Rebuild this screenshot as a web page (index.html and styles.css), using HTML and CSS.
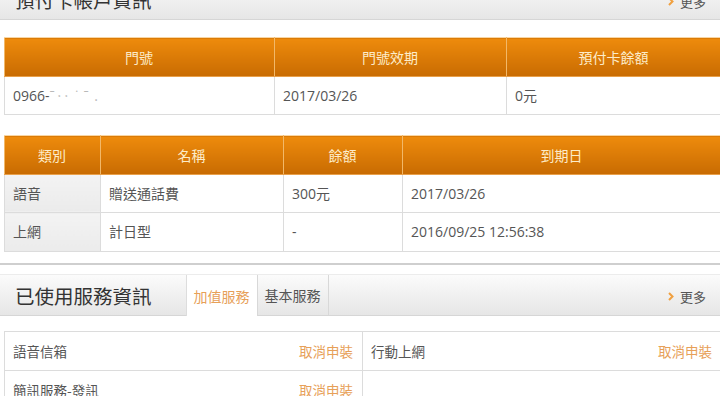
FILE: index.html
```html
<!DOCTYPE html>
<html lang="zh-Hant">
<head>
<meta charset="utf-8">
<title>帳戶資訊</title>
<link rel="stylesheet" href="styles.css">
</head>
<body>
<div class="page">
  <section class="panel panel-first">
    <div class="panel-head">
      <h2 class="panel-title">預付卡帳戶資訊</h2>
      <a class="more" href="#"><svg class="chev" width="6" height="9" viewBox="0 0 6 9"><path d="M1 1l3.5 3.5L1 8" fill="none" stroke="#f0a040" stroke-width="2"/></svg>更多</a>
    </div>
    <div class="panel-body">
      <table class="grid grid-acct">
        <thead>
          <tr><th class="c-num">門號</th><th class="c-exp">門號效期</th><th>預付卡餘額</th></tr>
        </thead>
        <tbody>
          <tr><td>0966-<span class="masked">ˉ‥ ˙ ˉ  .</span></td><td>2017/03/26</td><td>0元</td></tr>
        </tbody>
      </table>
      <table class="grid grid-bal">
        <thead>
          <tr><th class="c-type">類別</th><th class="c-name">名稱</th><th class="c-amt">餘額</th><th>到期日</th></tr>
        </thead>
        <tbody>
          <tr><td class="cat">語音</td><td>贈送通話費</td><td>300元</td><td>2017/03/26</td></tr>
          <tr><td class="cat">上網</td><td>計日型</td><td>-</td><td>2016/09/25 12:56:38</td></tr>
        </tbody>
      </table>
    </div>
  </section>
  <section class="panel">
    <div class="panel-head">
      <h2 class="panel-title">已使用服務資訊</h2>
      <nav class="tabs">
        <span class="tab tab-active">加值服務</span>
        <span class="tab">基本服務</span>
      </nav>
      <a class="more" href="#"><svg class="chev" width="6" height="9" viewBox="0 0 6 9"><path d="M1 1l3.5 3.5L1 8" fill="none" stroke="#f0a040" stroke-width="2"/></svg>更多</a>
    </div>
    <div class="svc-list">
      <div class="svc"><span>語音信箱</span><a class="cancel" href="#">取消申裝</a></div>
      <div class="svc"><span>行動上網</span><a class="cancel" href="#">取消申裝</a></div>
      <div class="svc"><span>簡訊服務-發訊</span><a class="cancel" href="#">取消申裝</a></div>
      <div class="svc"></div>
    </div>
  </section>
</div>
</body>
</html>
```

FILE: styles.css
```css
html, body {
  margin: 0;
  padding: 0;
  background: #fff;
  overflow: hidden;
}
body {
  font-family: "Open Sans", "Noto Sans CJK TC", sans-serif;
  color: #555;
  font-size: 14px;
}
.page {
  width: 726px;
}
.panel-first {
  margin-top: -21px;
  border-bottom: 2px solid #cfcfcf;
  padding-bottom: 11px;
  margin-bottom: 9px;
}
.panel-head {
  height: 40px;
  display: flex;
  align-items: center;
  border-top: 1px solid #ececec;
  border-bottom: 1px solid #d6d6d6;
  background: linear-gradient(#fbfbfb, #e6e6e6);
  padding: 0 8px 0 15px;
  box-sizing: content-box;
}
.panel-first .panel-head {
  border-top: 0;
}
.panel-title {
  margin: 0;
  font-family: "Noto Sans CJK TC", sans-serif;
  font-weight: normal;
  font-size: 19.5px;
  color: #333;
  line-height: 40px;
  position: relative;
  top: 1px;
}
.more {
  margin-left: auto;
  margin-right: 12px;
  display: flex;
  align-items: center;
  gap: 6px;
  font-family: "Noto Sans CJK TC", sans-serif;
  font-size: 13px;
  color: #555;
  text-decoration: none;
  padding-top: 4px;
}
.chev {
  display: block;
}
.panel-body {
  padding: 17px 0 0 4px;
}
.grid {
  border-collapse: collapse;
  width: 718px;
  table-layout: fixed;
}
.grid th, .grid td {
  height: 20px;
  line-height: 20px;
  padding: 9px 9px 8.5px 8px;
  border: 1px solid #dcdcdc;
  text-align: left;
  font-weight: normal;
  white-space: nowrap;
  overflow: hidden;
}
.grid th {
  text-align: center;
  color: #fdecc9;
  font-family: "Noto Sans CJK TC", sans-serif;
  font-size: 14px;
  background: linear-gradient(#ee8b0c, #c86b02);
  border-color: #f2b868;
  border-top-color: #f8d6a4;
  border-bottom-color: #e9a04a;
}
.grid td {
  background: #fff;
}
.grid-bal {
  margin-top: 20px;
}
.c-num { width: 252px; }
.c-exp { width: 214px; }
.c-type { width: 78px; }
.c-name { width: 165px; }
.c-amt { width: 101px; }
.grid td.cat {
  background: linear-gradient(#f3f3f3, #ebebeb);
}
.masked {
  color: #b9b9b9;
  letter-spacing: 1px;
}
.tabs {
  display: flex;
  align-self: stretch;
  margin-left: 34px;
}
.tab {
  display: flex;
  align-items: center;
  padding: 1px 7px 0 7px;
  font-family: "Noto Sans CJK TC", sans-serif;
  font-size: 14px;
  color: #555;
  border-right: 1px solid #d8d8d8;
}
.tab-active {
  background: #fff;
  color: #e7a058;
  border-left: 1px solid #dddddd;
  margin-bottom: -1px;
}
.svc-list {
  margin: 15px 0 0 4px;
  width: 716px;
  border: 1px solid #dcdcdc;
  display: grid;
  grid-template-columns: 1fr 1fr;
}
.svc {
  height: 38px;
  display: flex;
  align-items: center;
  justify-content: space-between;
  padding: 0 9px 0 8px;
  font-family: "Noto Sans CJK TC", sans-serif;
  font-size: 13.5px;
  color: #555;
  border-bottom: 1px solid #dcdcdc;
}
.svc:nth-child(odd) {
  border-right: 1px solid #dcdcdc;
}
.cancel {
  color: #e7a058;
  text-decoration: none;
}
```
